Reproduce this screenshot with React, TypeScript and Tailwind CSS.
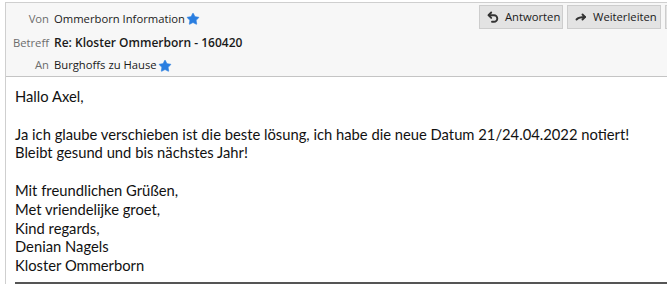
import { Star } from 'lucide-react'

const ui = { fontFamily: '"Open Sans", "Noto Sans", sans-serif' }
const body = { fontFamily: 'Lato, "Liberation Sans", sans-serif' }

function ReplyIcon() {
    return (
        <svg width="12" height="13" viewBox="0 0 12 13" fill="none" stroke="#333" strokeWidth="1.9" strokeLinecap="round" strokeLinejoin="round" aria-hidden="true">
            <path d="M4.2 1.5 1.5 4.2 4.2 6.9" />
            <path d="M1.8 4.2H7a3.3 3.3 0 0 1 0 6.6H5" />
        </svg>
    )
}

function ForwardIcon() {
    return (
        <svg width="12" height="12" viewBox="0 0 12 12" fill="none" stroke="#333" strokeWidth="1.9" strokeLinecap="round" strokeLinejoin="round" aria-hidden="true">
            <path d="M1.5 8.5C3 6.8 5.5 6 10 6" />
            <path d="M7.5 3.5 10 6 7.5 8.5" />
        </svg>
    )
}

function HeaderRow({ label, children, bold = false, height = 'h-[24px]' }: { label: string; children: React.ReactNode; bold?: boolean; height?: string }) {
    return (
        <div className={`flex items-center ${height}`}>
            <span className="w-[43px] text-right text-[#6d6d6d] shrink-0">{label}</span>
            <span className={`ml-[5px] flex items-center text-[#1a1a1a] ${bold ? 'font-semibold text-[12px]' : ''}`}>{children}</span>
        </div>
    )
}

function Button({ icon, label, width }: { icon?: React.ReactNode; label: string; width: string }) {
    return (
        <button className={`${width} h-[24px] shrink-0 flex items-center gap-[6px] pl-[7px] bg-[#e3e3e3] border border-[#cdcdcd] text-[#1a1a1a]`}>
            {icon}
            <span>{label}</span>
        </button>
    )
}

export default function App() {
    return (
        <div className="w-[667px] h-[285px] bg-white overflow-hidden pt-[2px]">
            <div className="ml-[5px] border-l border-t border-[#cfcfcf]">
                {/* Header */}
                <div className="flex bg-[#f7f7f7] border-b border-[#c4c4c4] text-[11.25px] h-[74px]" style={ui}>
                    <div className="flex-1 pt-[4px]">
                        <HeaderRow label="Von">
                            Ommerborn Information
                            <Star className="w-[14px] h-[14px] ml-[1px] text-[#2a7ee0] fill-[#2a7ee0]" strokeWidth={1} />
                        </HeaderRow>
                        <HeaderRow label="Betreff" bold>
                            Re: Kloster Ommerborn - 160420
                        </HeaderRow>
                        <HeaderRow label="An" height="h-[21px]">
                            Burghoffs zu Hause
                            <Star className="w-[14px] h-[14px] ml-[1px] text-[#2a7ee0] fill-[#2a7ee0]" strokeWidth={1} />
                        </HeaderRow>
                    </div>
                    <div className="w-[188px] shrink-0 flex gap-[4px] pt-[2px]">
                        <Button icon={<ReplyIcon />} label="Antworten" width="w-[84px]" />
                        <Button icon={<ForwardIcon />} label="Weiterleiten" width="w-[94px]" />
                        <Button label="" width="w-[40px]" />
                    </div>
                </div>

                {/* Body */}
                <div className="pl-[9px] pt-[10px] text-[14.75px] leading-[18.8px] text-[#111]" style={body}>
                    <p>Hallo Axel,</p>
                    <p className="mt-[18.8px]">Ja ich glaube verschieben ist die beste lösung, ich habe die neue Datum 21/24.04.2022 notiert!</p>
                    <p>Bleibt gesund und bis nächstes Jahr!</p>
                    <p className="mt-[18.8px]">Mit freundlichen Grüßen,</p>
                    <p>Met vriendelijke groet,</p>
                    <p>Kind regards,</p>
                    <p>Denian Nagels</p>
                    <p>Kloster Ommerborn</p>
                    <div className="mt-[7px] border-t-2 border-[#555]" />
                </div>
            </div>
        </div>
    )
}
